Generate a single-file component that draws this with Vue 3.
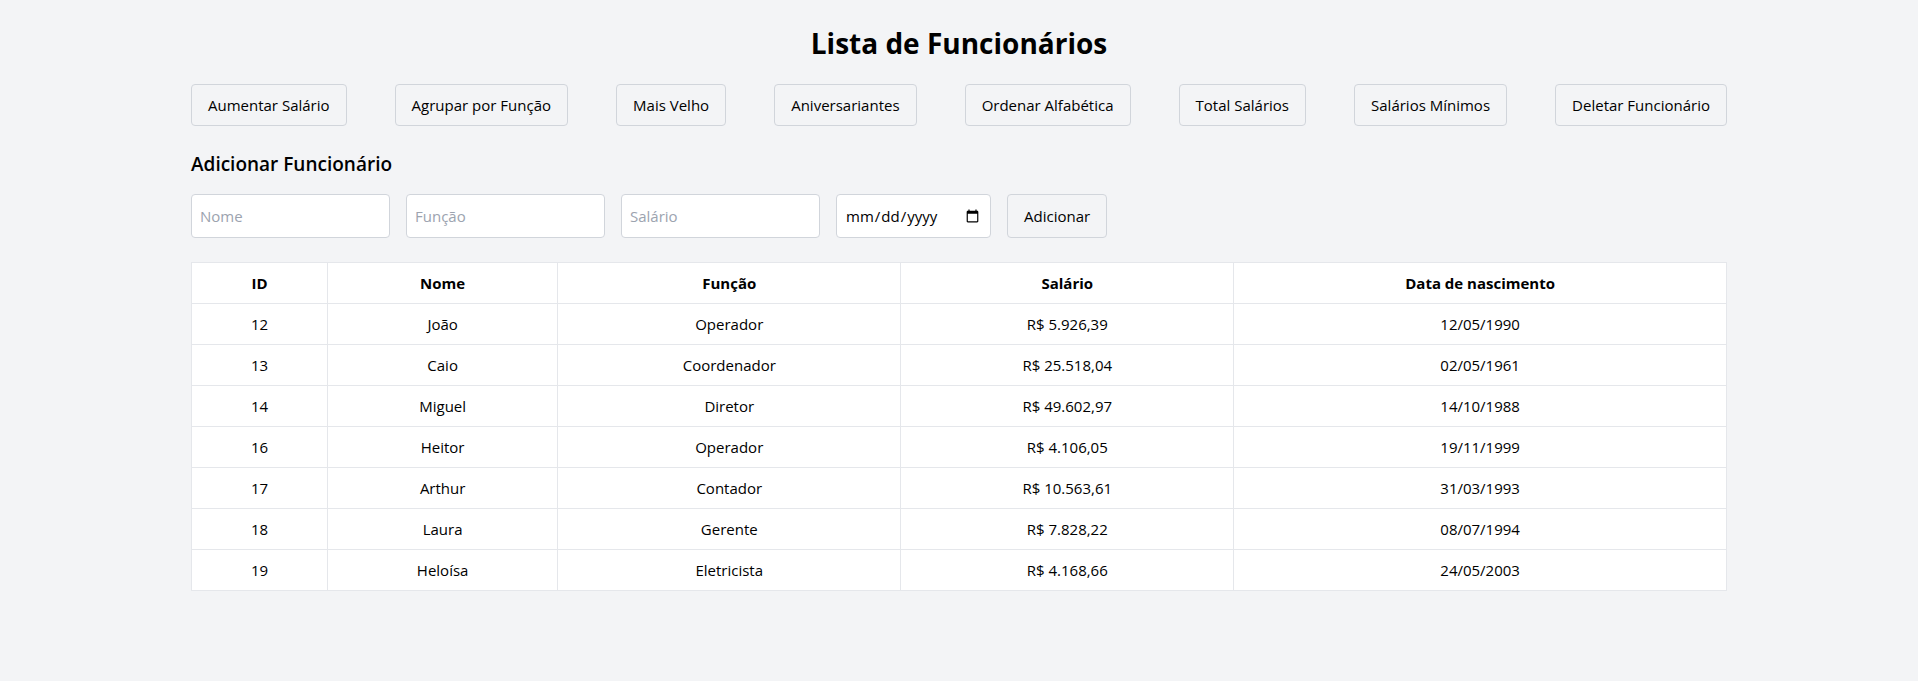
<script setup>
import { reactive, ref } from 'vue'

const actions = [
  'Aumentar Salário',
  'Agrupar por Função',
  'Mais Velho',
  'Aniversariantes',
  'Ordenar Alfabética',
  'Total Salários',
  'Salários Mínimos',
  'Deletar Funcionário'
]

const employees = ref([
  { id: 12, name: 'João', role: 'Operador', salary: '5.926,39', birth: '12/05/1990' },
  { id: 13, name: 'Caio', role: 'Coordenador', salary: '25.518,04', birth: '02/05/1961' },
  { id: 14, name: 'Miguel', role: 'Diretor', salary: '49.602,97', birth: '14/10/1988' },
  { id: 16, name: 'Heitor', role: 'Operador', salary: '4.106,05', birth: '19/11/1999' },
  { id: 17, name: 'Arthur', role: 'Contador', salary: '10.563,61', birth: '31/03/1993' },
  { id: 18, name: 'Laura', role: 'Gerente', salary: '7.828,22', birth: '08/07/1994' },
  { id: 19, name: 'Heloísa', role: 'Eletricista', salary: '4.168,66', birth: '24/05/2003' }
])

const form = reactive({ name: '', role: '', salary: '', birth: '' })

function addEmployee() {
  if (!form.name || !form.role || !form.salary || !form.birth) return
  const lastId = Math.max(...employees.value.map((e) => e.id))
  employees.value.push({
    id: lastId + 1,
    name: form.name,
    role: form.role,
    salary: form.salary,
    birth: form.birth.split('-').reverse().join('/')
  })
  Object.assign(form, { name: '', role: '', salary: '', birth: '' })
}
</script>

<template>
  <main class="container">
    <h1 class="title">Lista de Funcionários</h1>

    <div class="actions">
      <button v-for="action in actions" :key="action" type="button" class="btn">{{ action }}</button>
    </div>

    <section>
      <h2 class="subtitle">Adicionar Funcionário</h2>
      <form class="form" @submit.prevent="addEmployee">
        <input v-model="form.name" class="field" type="text" placeholder="Nome" aria-label="Nome" />
        <input v-model="form.role" class="field" type="text" placeholder="Função" aria-label="Função" />
        <input v-model="form.salary" class="field" type="text" placeholder="Salário" aria-label="Salário" />
        <input v-model="form.birth" class="field date" type="date" aria-label="Data de nascimento" />
        <button type="submit" class="btn">Adicionar</button>
      </form>
    </section>

    <table class="table">
      <colgroup>
        <col class="col-id" />
        <col class="col-name" />
        <col class="col-role" />
        <col class="col-salary" />
        <col />
      </colgroup>
      <thead>
        <tr>
          <th scope="col">ID</th>
          <th scope="col">Nome</th>
          <th scope="col">Função</th>
          <th scope="col">Salário</th>
          <th scope="col">Data de nascimento</th>
        </tr>
      </thead>
      <tbody>
        <tr v-for="e in employees" :key="e.id">
          <td>{{ e.id }}</td>
          <td>{{ e.name }}</td>
          <td>{{ e.role }}</td>
          <td>R$ {{ e.salary }}</td>
          <td>{{ e.birth }}</td>
        </tr>
      </tbody>
    </table>
  </main>
</template>

<style>
body {
  margin: 0;
  background: #f3f4f6;
}
</style>

<style scoped>
.container {
  box-sizing: border-box;
  max-width: 1536px;
  margin: 0 auto;
  padding: 24px 0;
  color: #000;
  font-family: "Segoe UI", "Open Sans", "Noto Sans", sans-serif;
  font-size: 15px;
  line-height: 24px;
}

.title {
  margin: 0 0 22px;
  font-size: 28px;
  line-height: 38px;
  font-weight: 700;
  text-align: center;
}

.actions {
  display: flex;
  flex-wrap: wrap;
  justify-content: space-between;
  gap: 16px;
  margin-bottom: 24px;
}

.btn {
  padding: 8px 16px;
  border: 1px solid #d1d5db;
  border-radius: 4px;
  background: transparent;
  color: inherit;
  font: inherit;
  cursor: pointer;
}

.subtitle {
  margin: 0 0 16px;
  font-size: 19px;
  line-height: 28px;
  font-weight: 600;
}

.form {
  display: flex;
  flex-wrap: wrap;
  gap: 16px;
  margin-bottom: 24px;
}

.field {
  box-sizing: border-box;
  width: 199px;
  height: 44px;
  padding: 8px;
  border: 1px solid #d1d5db;
  border-radius: 4px;
  background: #fff;
  color: inherit;
  font: inherit;
}

.field::placeholder {
  color: #9ca3af;
  opacity: 1;
}

.date {
  width: 155px;
}

.table {
  width: 100%;
  table-layout: fixed;
  border-collapse: collapse;
  background: #fff;
  text-align: center;
}

.table th,
.table td {
  padding: 8px 16px;
  border: 1px solid #e5e7eb;
}

.table th {
  font-weight: 700;
}

.col-id {
  width: 136px;
}

.col-name {
  width: 15%;
}

.col-role {
  width: 343px;
}

.col-salary {
  width: 333px;
}
</style>
